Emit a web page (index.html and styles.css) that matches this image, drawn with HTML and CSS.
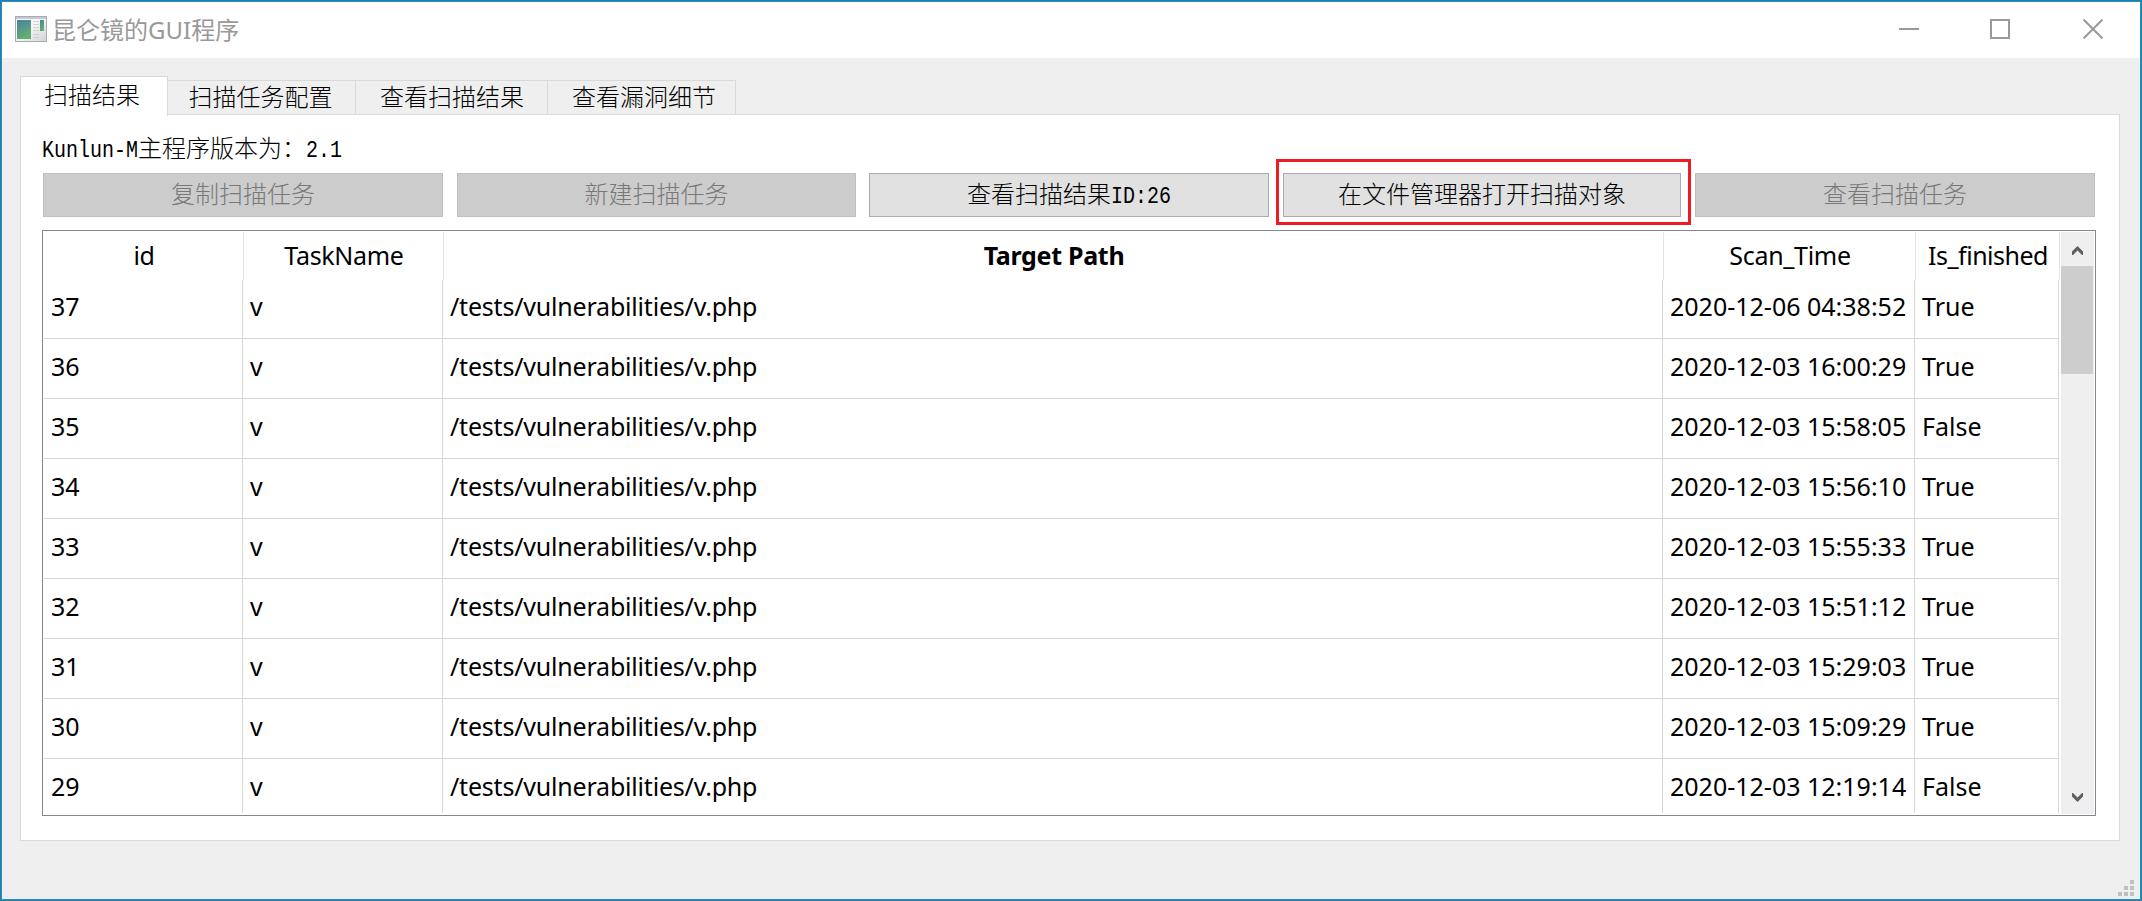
FILE: index.html
```html
<!DOCTYPE html>
<html lang="zh-CN">
<head>
<meta charset="utf-8">
<title>昆仑镜的GUI程序</title>
<link rel="stylesheet" href="styles.css">
</head>
<body>
<div class="window">
  <header class="titlebar">
    <svg class="app-icon" width="32" height="26" viewBox="0 0 32 26">
      <defs>
        <linearGradient id="pane" x1="0" y1="0" x2="0.4" y2="1"><stop offset="0" stop-color="#4a7fa5"/><stop offset="1" stop-color="#62b070"/></linearGradient>
        <linearGradient id="frame" x1="0" y1="0" x2="1" y2="1"><stop offset="0.4" stop-color="#fafafa"/><stop offset="1" stop-color="#d0d3d6"/></linearGradient>
      </defs>
      <rect x="0.5" y="0.5" width="31" height="25" fill="url(#frame)" stroke="#a5acb4"/>
      <rect x="1" y="1" width="30" height="2" fill="#c3cad3"/>
      <rect x="2" y="4" width="14" height="19" fill="url(#pane)"/>
      <rect x="25" y="4" width="4" height="11" fill="url(#pane)"/>
      <path d="M18 5.500h6M18 8.500h6M18 11.500h6M18 14.500h6M18 18.500h6M18 21.500h6" stroke="#cfd2d5"/>
    </svg>
    <span class="title">昆仑镜的GUI程序</span>
    <div class="controls">
      <svg width="20" height="20" viewBox="0 0 20 20"><path d="M0 10h20"/></svg>
      <svg width="20" height="20" viewBox="0 0 20 20"><path d="M1 1h18v18h-18z"/></svg>
      <svg width="20" height="20" viewBox="0 0 20 20"><path d="M.6 .6l18.8 18.8M19.4 .6l-18.8 18.8"/></svg>
    </div>
  </header>
  <main class="content">
    <nav class="tabs">
      <div class="tab active">扫描结果</div>
      <div class="tab w188 second">扫描任务配置</div>
      <div class="tab">查看扫描结果</div>
      <div class="tab w188 last">查看漏洞细节</div>
    </nav>
    <section class="panel">
      <div class="version"><span class="mono">Kunlun-M</span>主程序版本为：<span class="mono">2.1</span></div>
      <div class="buttons">
        <div class="btn disabled">复制扫描任务</div>
        <div class="btn disabled">新建扫描任务</div>
        <div class="btn wide">查看扫描结果<span class="mono">ID:26</span></div>
        <div class="btn marked">在文件管理器打开扫描对象</div>
        <div class="btn disabled">查看扫描任务</div>
      </div>
      <div class="table">
        <div class="grid">
          <div class="head"><div>id</div><div>TaskName</div><div class="bold">Target Path</div><div>Scan_Time</div><div class="tight">Is_finished</div></div>
          <div class="rows">
            <div class="row"><div>37</div><div>v</div><div class="path">/tests/vulnerabilities/v.php</div><div>2020-12-06 04:38:52</div><div>True</div></div>
            <div class="row"><div>36</div><div>v</div><div class="path">/tests/vulnerabilities/v.php</div><div>2020-12-03 16:00:29</div><div>True</div></div>
            <div class="row"><div>35</div><div>v</div><div class="path">/tests/vulnerabilities/v.php</div><div>2020-12-03 15:58:05</div><div>False</div></div>
            <div class="row"><div>34</div><div>v</div><div class="path">/tests/vulnerabilities/v.php</div><div>2020-12-03 15:56:10</div><div>True</div></div>
            <div class="row"><div>33</div><div>v</div><div class="path">/tests/vulnerabilities/v.php</div><div>2020-12-03 15:55:33</div><div>True</div></div>
            <div class="row"><div>32</div><div>v</div><div class="path">/tests/vulnerabilities/v.php</div><div>2020-12-03 15:51:12</div><div>True</div></div>
            <div class="row"><div>31</div><div>v</div><div class="path">/tests/vulnerabilities/v.php</div><div>2020-12-03 15:29:03</div><div>True</div></div>
            <div class="row"><div>30</div><div>v</div><div class="path">/tests/vulnerabilities/v.php</div><div>2020-12-03 15:09:29</div><div>True</div></div>
            <div class="row"><div>29</div><div>v</div><div class="path">/tests/vulnerabilities/v.php</div><div>2020-12-03 12:19:14</div><div>False</div></div>
          </div>
        </div>
        <div class="scrollbar">
          <svg class="arrow" width="33" height="34" viewBox="0 0 33 34"><path d="M11 23v-3.500l5.500-5.500l5.500 5.500v3.500h-1l-4.500-4.500l-4.500 4.500z"/></svg>
          <div class="thumb"></div>
          <svg class="arrow down" width="33" height="34" viewBox="0 0 33 34"><path d="M11 13v3.500l5.500 5.500l5.500-5.500v-3.500h-1l-4.500 4.500l-4.500-4.500z"/></svg>
        </div>
      </div>
    </section>
    <svg class="grip" width="16" height="16" viewBox="0 0 16 16"><path d="M12 0h4v4h-4zM6 6h4v4h-4zM12 6h4v4h-4zM0 12h4v4h-4zM6 12h4v4h-4zM12 12h4v4h-4z"/></svg>
  </main>
</div>
</body>
</html>
```
FILE: styles.css
```css
*, *::after { box-sizing: border-box; }
body { margin: 0; overflow: hidden; }
.window {
  width: 2142px; height: 901px; padding: 2px;
  display: flex; flex-direction: column;
  background: #2d7fac;
  box-shadow: inset 0 0 0 1px #3179a0, inset 0 0 0 2px #1b93cf;
  font: 24px/1 "Liberation Mono", "Noto Sans CJK SC", sans-serif;
  color: #000;
}
.titlebar {
  height: 56px; flex: none; display: flex; align-items: center;
  padding: 0 37px 0 13px; background: #fff;
}
.app-icon { margin-top: -2px; }
.title {
  margin-left: 5px; margin-top: -1px; color: #999; font-size: 24px; white-space: nowrap;
  font-family: "Noto Sans", "Noto Sans CJK SC", sans-serif;
}
.controls { margin: -2px 0 0 auto; display: flex; }
.controls svg { margin-left: 71px; fill: none; stroke: #999; stroke-width: 2; }
.controls svg:last-child { margin-left: 73px; }
.content {
  flex: 1; background: #efefef; padding: 18px 20px 3px 18px;
  display: flex; flex-direction: column;
}
.tabs { height: 38px; flex: none; display: flex; align-items: flex-end; }
.tab {
  width: 192px; height: 34px; padding: 6px 0 0 1px; text-align: center;
  border: 1px solid #d9d9d9; border-left: 0; border-bottom: 0;
  font-weight: 300; white-space: nowrap; line-height: 26px;
}
.tab.w188 { width: 188px; }
.tab.second { padding: 6px 2px 0 0; }
.tab.last { padding: 6px 0 0 5px; }
.tab.active {
  width: 148px; height: 40px; margin-bottom: -2px; padding: 8px 4px 0 0;
  border-left: 1px solid #d9d9d9; background: #fff; z-index: 1;
}
.panel {
  width: 2100px; height: 727px; flex: none; padding: 22px 23px 24px 21px;
  background: #fff; border: 1px solid #d9d9d9;
  display: flex; flex-direction: column;
}
.version { height: 36px; line-height: 28px; font-weight: 300; }
.mono {
  display: inline-block; font-family: "Liberation Mono", monospace; font-size: 20px;
  line-height: 20px; transform: scaleY(1.2); transform-origin: 0 75%;
}
.buttons {
  margin-left: 1px; height: 44px; flex: none; display: grid;
  grid-template-columns: 400px 399px 399px 398px 400px; column-gap: 14px;
}
.btn {
  position: relative; border: 1px solid #adadad; background: #e1e1e1;
  padding-top: 2px; line-height: 42px; height: 44px;
  text-align: center; font-weight: 300; white-space: nowrap;
}
.btn.wide { margin-left: -1px; }
.btn.disabled { background: #ccc; border-color: #bfbfbf; color: #787878; }
.btn.marked::after {
  content: ""; position: absolute; left: -8px; top: -15px;
  width: 415px; height: 66px; border: 3px solid #ed1c24;
}
.table {
  width: 2054px; height: 586px; margin-top: 13px; padding: 1px;
  border: 1px solid #828790; display: flex;
  font: 25px/1 "Noto Sans", sans-serif;
}
.grid { width: 2017px; }
.head, .row { display: grid; }
.head { grid-template-columns: 200px 200px 1220px 252px 144px; height: 48px; }
.head div {
  border-right: 1px solid #e5e5e5; padding-left: 1px; text-align: center;
  line-height: 47px; letter-spacing: -0.3px;
}
.head .tight { letter-spacing: -0.5px; }
.bold { font-weight: 700; }
.rows { height: 533px; overflow: hidden; }
.row { grid-template-columns: 199px 200px 1220px 252px 144px; height: 60px; width: 2015px; }
.row:first-child { height: 59px; }
.row div {
  border-right: 1px solid #d8d8d8; border-bottom: 1px solid #d8d8d8;
  padding-left: 7px; line-height: 55px; white-space: nowrap;
}
.row:first-child div { line-height: 53px; }
.row .path { letter-spacing: -0.2px; }
.scrollbar { width: 33px; height: 582px; background: #efefef; display: flex; flex-direction: column; }
.thumb { width: 32px; height: 108px; background: #cdcdcd; }
.arrow { flex: none; fill: #606060; }
.down { margin-top: auto; }
.grip { margin: 39px -14px 0 auto; flex: none; fill: #bfbfbf; }
```
